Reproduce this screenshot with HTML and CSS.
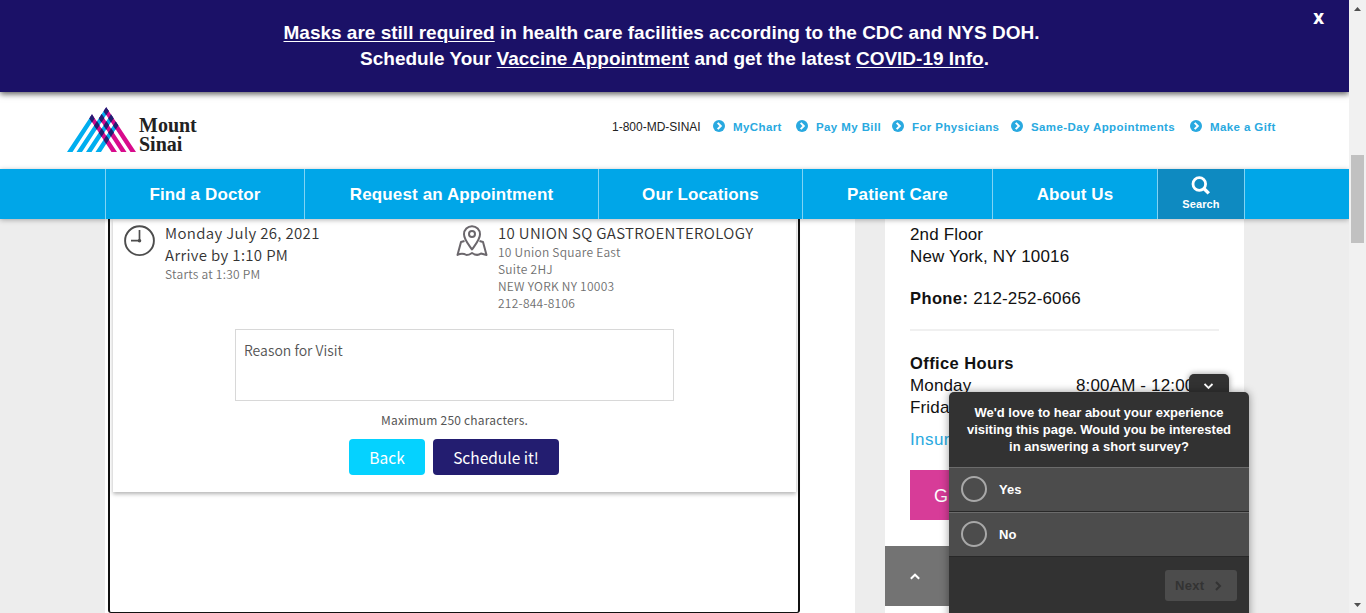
FILE: index.html
```html
<!DOCTYPE html>
<html lang="en">
<head>
<meta charset="utf-8">
<title>Mount Sinai</title>
<link rel="stylesheet" href="styles.css">
</head>
<body>
<svg class="defs" width="0" height="0">
  <symbol id="go" viewBox="0 0 12 12"><circle cx="6" cy="6" r="6" fill="#29a9e0"/><path d="M4.7 2.9 7.8 6 4.7 9.1" fill="none" stroke="#fff" stroke-width="2"/></symbol>
</svg>
<div class="window">
  <div class="page">
    <div class="banner">
      <p class="banner-line first"><a>Masks are still required</a> in health care facilities according to the CDC and NYS DOH.</p>
      <p class="banner-line">Schedule Your <a>Vaccine Appointment</a> and get the latest <a>COVID-19 Info</a>.</p>
      <span class="close">X</span>
    </div>
    <header class="header">
      <div class="logo">
        <svg width="69" height="45" viewBox="0 0 69 44" preserveAspectRatio="none">
          <defs><clipPath id="cy"><path d="M0 44H5.500L27.5 11.500 25 7.2ZM9.5 44H15L42 3.9 39.2 .2ZM19 44H24.500L46.8 10.9 44 7.2ZM28.5 44H34L51.5 17.9 48.7 14.2Z"/></clipPath></defs>
          <path fill="#00aeef" d="M0 44H5.500L27.5 11 25 7.2ZM9.5 44H15L41.7 3.9 39.2 .2ZM19 44H24.500L46.5 10.9 44 7.2ZM28.5 44H34L51.2 17.9 48.7 14.2Z"/>
          <path fill="#d80b8c" d="M44.500 44H50L25 7.2 22.5 10.9ZM54 44H59.5L34.5 7.2 32 10.9ZM63.500 44H69L39.2 .2 36.7 3.9Z"/>
          <path fill="#221f72" stroke="#221f72" stroke-width=".8" clip-path="url(#cy)" d="M45 44H50L25 7.2 22.5 10.9ZM54.5 44H59.5L34.5 7.2 32 10.9ZM64 44H69L39.2 .2 36.7 3.9Z"/>
        </svg>
        <div class="logo-text"><span>Mount</span><span>Sinai</span></div>
      </div>
      <div class="quick">
        <span class="tel">1-800-MD-SINAI</span>
        <a class="q q1"><svg><use href="#go"/></svg><span>MyChart</span></a>
        <a class="q q2"><svg><use href="#go"/></svg><span>Pay My Bill</span></a>
        <a class="q q3"><svg><use href="#go"/></svg><span>For Physicians</span></a>
        <a class="q q4"><svg><use href="#go"/></svg><span>Same-Day Appointments</span></a>
        <a class="q q5"><svg><use href="#go"/></svg><span>Make a Gift</span></a>
      </div>
    </header>
    <nav class="nav">
      <a class="n1"><span>Find a Doctor</span></a>
      <a class="n2"><span>Request an Appointment</span></a>
      <a class="n3"><span>Our Locations</span></a>
      <a class="n4"><span>Patient Care</span></a>
      <a class="n5"><span>About Us</span></a>
      <a class="search"><svg width="20" height="19" viewBox="0 0 20 19" fill="none" stroke="#fff"><circle cx="8.3" cy="8" r="6.3" stroke-width="2.8"/><path d="M12.8 12.5 17.8 17.4" stroke-width="3.4"/></svg><span>Search</span></a>
    </nav>
    <div class="content">
      <main class="main">
        <div class="frame">
          <section class="card">
            <div class="details">
              <div class="detail when">
                <svg width="32" height="32" viewBox="0 0 32 32" fill="none" stroke="#4d4d4d"><circle cx="16.5" cy="15.7" r="14.4" stroke-width="1.900"/><path d="M16.500 5V15.7H8" stroke-width="1.7"/><circle cx="16.5" cy="15.7" r="1.8" fill="#4d4d4d" stroke="none"/></svg>
                <div><p class="big w1">Monday July 26, 2021</p><p class="big">Arrive by 1:10 PM</p><p class="small">Starts at 1:30 PM</p></div>
              </div>
              <div class="detail">
                <svg width="32" height="32" viewBox="0 0 32 32" fill="none" stroke="#6b676c" stroke-width="2" stroke-linejoin="round"><path d="M16 24.5C13 20 8 14.5 8 9.2a8 8 0 0 1 16 0C24 14.500 19 20 16 24.500Z"/><circle cx="16" cy="9" r="3"/><path d="M8.500 16 5 17 1.500 30Q6 27.500 10.500 30Q13 30 16 28Q21 31.500 25 28.500L30.500 30 27 17 23.500 16"/></svg>
                <div><p class="big w2">10 UNION SQ GASTROENTEROLOGY</p><p class="small">10 Union Square East</p><p class="small">Suite 2HJ</p><p class="small">NEW YORK NY 10003</p><p class="small">212-844-8106</p></div>
              </div>
            </div>
            <div class="reason">Reason for Visit</div>
            <p class="max">Maximum 250 characters.</p>
            <div class="buttons"><button class="btn back">Back</button><button class="btn schedule">Schedule it!</button></div>
          </section>
        </div>
      </main>
      <aside class="side">
        <p>2nd Floor</p><p>New York, NY 10016</p>
        <p class="phone"><b>Phone:</b> 212-252-6066</p>
        <hr>
        <p><b>Office Hours</b></p>
        <p class="hours"><span>Monday</span><span>8:00AM - 12:00</span></p>
        <p class="hours"><span>Friday</span></p>
        <p class="ins">Insur</p>
        <div class="pink">G</div>
        <div class="totop"><svg width="10" height="7" viewBox="0 0 10 7" fill="none" stroke="#fff" stroke-width="2"><path d="M.8 5.800 5 1.700 9.200 5.800"/></svg></div>
      </aside>
    </div>
    <div class="survey">
      <div class="tab"><svg width="10" height="7" viewBox="0 0 10 7" fill="none" stroke="#fff" stroke-width="1.800"><path d="M.500 1 4.500 5 8.500 1"/></svg></div>
      <div class="panel">
        <div class="ask"><p>We'd love to hear about your experience</p><p>visiting this page. Would you be interested</p><p>in answering a short survey?</p></div>
        <div class="opt"><i></i>Yes</div>
        <div class="opt"><i></i>No</div>
        <div class="foot"><div class="next">Next<svg width="7" height="10" viewBox="0 0 7 10" fill="none" stroke="#333" stroke-width="2"><path d="M1 1 5 5 1 9"/></svg></div></div>
      </div>
    </div>
  </div>
  <div class="scroll"><svg width="17" height="17" viewBox="0 0 17 17"><path d="M5 11 8.500 7 12 11Z" fill="#505050"/></svg><div class="thumb"></div><svg width="17" height="17" viewBox="0 0 17 17"><path d="M5 7 8.500 11 12 7Z" fill="#505050"/></svg></div>
</div>
</body>
</html>
```
FILE: styles.css
```css
* { box-sizing: border-box; }
body { margin: 0; font-family: "Liberation Sans", Arial, sans-serif; color: #111; overflow: hidden; }
p { margin: 0; }
svg { display: block; flex: none; }
.defs { position: absolute; }
.window { display: flex; width: 1366px; height: 613px; }
.page { position: relative; width: 1349px; height: 613px; overflow: hidden; display: flex; flex-direction: column; background: #ededed; }
.banner { position: relative; z-index: 3; height: 92px; flex: none; padding-top: 20px; background: #1b1167; color: #fff; text-align: center; font-size: 19px; font-weight: bold; line-height: 26px; box-shadow: 0 2px 6px rgba(0,0,0,.65); white-space: nowrap; }
.first { padding-right: 26px; }
.banner a { text-decoration: underline; text-decoration-thickness: 1px; text-underline-offset: 2px; }
.close { position: absolute; right: 25px; top: 5px; font-family: "Open Sans", sans-serif; font-size: 15px; font-weight: 800; }

.header { height: 77px; flex: none; background: #fff; display: flex; justify-content: space-between; padding: 15px 72px 0 67px; }
.logo { display: flex; gap: 3px; }
.logo-text { padding-top: 9px; font: bold 20px/19px "Liberation Serif", serif; color: #222; }
.logo-text span { display: block; }
.quick { display: flex; align-items: flex-start; padding-top: 12px; font-size: 12px; line-height: 16px; white-space: nowrap; }
.tel { width: 101px; color: #222; }
.q { display: flex; gap: 8px; color: #29a9e0; font-size: 11.500px; font-weight: bold; letter-spacing: .4px; }
.q svg { width: 12px; height: 12px; margin-top: 1px; }
.q1 { width: 83px; } .q2 { width: 96px; } .q3 { width: 119px; } .q4 { width: 179px; } .q5 { width: 87px; }

.nav { position: relative; z-index: 2; height: 50px; flex: none; display: flex; padding-left: 105px; background: #00a6e8; color: #fff; font-size: 17px; font-weight: bold; letter-spacing: .13px; box-shadow: 0 1px 5px rgba(0,0,0,.3); white-space: nowrap; }
.nav a { border-left: 1px solid #80d3f4; padding-top: 2px; display: flex; align-items: center; justify-content: center; }
.n1 { width: 199px; } .n2 { width: 294px; } .n3 { width: 204px; } .n4 { width: 190px; } .n5 { width: 165px; }
.nav .search { width: 88px; flex-direction: column; justify-content: flex-start; padding-top: 7px; background: #0e8ac1; border-right: 1px solid #80d3f4; font-size: 11px; letter-spacing: .1px; line-height: 16px; }
.search svg { margin-bottom: 1px; }

.content { flex: 1; display: flex; gap: 30px; padding-left: 105px; min-height: 0; }
.main { width: 750px; padding-left: 3px; background: #fff; font-family: "Noto Sans CJK SC", sans-serif; }
.frame { width: 692px; height: 394px; border: 2px solid #111; border-top: 0; border-bottom-width: 1px; border-radius: 0 0 3px 3px; padding: 0 2px 0 3px; }
.card { height: 273px; box-shadow: 0 2px 4px rgba(0,0,0,.3); }
.details { display: flex; padding: 3px 0 0 10px; height: 110px; white-space: nowrap; }
.detail { display: flex; gap: 10px; }
.detail svg { margin-top: 3px; }
.when { width: 333px; }
.big { font-size: 15px; font-weight: 350; line-height: 22px; letter-spacing: .35px; color: #333; }
.small { position: relative; top: -1px; font-size: 12px; font-weight: 350; line-height: 17px; letter-spacing: .25px; color: #6f6f6f; }
.reason { width: 439px; height: 72px; margin-left: 122px; padding: 9px 8px; border: 1px solid #d8d8d8; font-size: 14px; font-weight: 350; line-height: 22px; color: #555; }
.max { margin-top: 10px; text-align: center; font-size: 12px; line-height: 17px; letter-spacing: .2px; color: #555; }
.buttons { display: flex; gap: 8px; margin: 11px 0 0 236px; }
.btn { height: 36px; padding: 0; border: 0; border-radius: 4px; color: #fff; font: 400 15.500px/36px "Noto Sans CJK SC", sans-serif; }
.back { width: 76px; background: #05d2ff; }
.schedule { width: 126px; background: #231d70; }

.side { width: 359px; padding: 5px 25px 0; background: #fff; font-size: 17px; line-height: 22px; letter-spacing: .15px; color: #111; white-space: nowrap; }
.side b { font-size: 16.500px; line-height: 0; letter-spacing: .4px; }
.phone { margin-top: 20px; height: 22px; }
.side hr { height: 2px; margin: 19px 0 22px; border: 0; background: #f0f0f0; }
.side hr + p { height: 22px; }
.hours { display: flex; }
.hours span:first-child { flex: none; width: 166px; }
.ins { margin-top: 10px; color: #29a9e0; letter-spacing: .4px; }
.pink { width: 180px; height: 50px; margin-top: 19px; padding-left: 24px; background: #d73c98; color: #fff; font-size: 18px; line-height: 52px; }
.totop { width: 64px; height: 60px; margin: 26px 0 0 -25px; padding: 27px 0 0 25px; background: #737373; }

.survey { position: absolute; z-index: 4; left: 949px; top: 374px; width: 300px; color: #fff; font-size: 13px; font-weight: bold; }
.tab { width: 40px; height: 18px; margin-left: 240px; padding: 9px 15px 0; border-radius: 5px 5px 0 0; background: #323232; box-shadow: 0 0 6px rgba(0,0,0,.4); }
.panel { position: relative; height: 230px; border-radius: 5px 5px 0 0; background: #323232; box-shadow: 0 0 8px rgba(0,0,0,.4); }
.ask { height: 75px; padding-top: 12px; line-height: 17px; text-align: center; white-space: nowrap; }
.opt { height: 45px; display: flex; align-items: center; gap: 12px; padding-left: 12px; background: #4c4c4c; border-top: 1px solid #6b6b6b; border-bottom: 1px solid #282828; }
.opt i { width: 26px; height: 26px; margin-bottom: 2px; border: 2px solid #a8a8a8; border-radius: 50%; }
.foot { padding: 13px 12px 0 216px; }
.next { height: 31px; display: flex; align-items: center; gap: 11px; padding-left: 10px; border-radius: 3px; background: #4c4c4c; color: #333; letter-spacing: .3px; }
.scroll { width: 17px; height: 613px; display: flex; flex-direction: column; background: #f1f1f1; }
.thumb { width: 13px; height: 88px; margin: 138px 2px auto; background: #c1c1c1; }
```
